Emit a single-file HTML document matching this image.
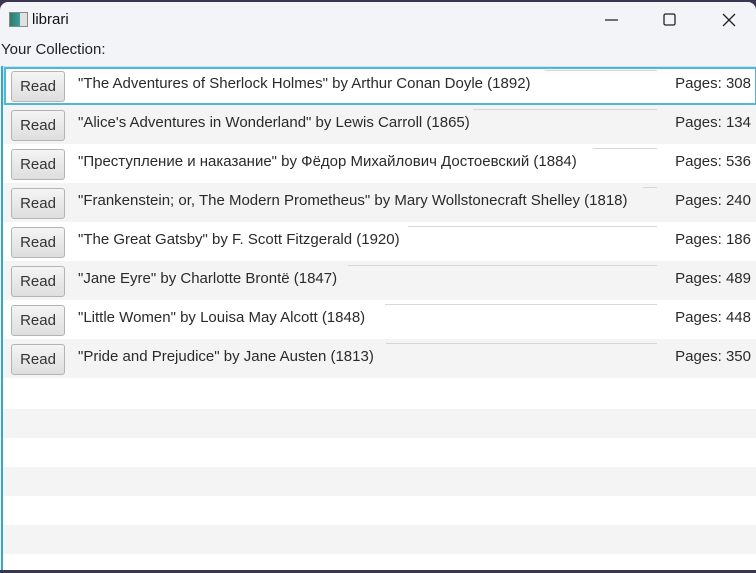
<!DOCTYPE html>
<html><head><meta charset="utf-8"><style>
*{margin:0;padding:0;box-sizing:border-box}
body{width:756px;height:573px;overflow:hidden;background:#3a3550;font-family:"Liberation Sans","DejaVu Sans",sans-serif;position:relative}
.win{position:absolute;left:0;top:2px;width:756px;height:568px;background:#f3f4f8;border-radius:8px 8px 0 0;overflow:hidden}
.title{position:absolute;left:0;top:0;width:756px;height:36px}
.title .ic{position:absolute;left:9px;top:10px;width:19px;height:15px;background:linear-gradient(90deg,#2d7d6a,#3aa0a0 60%,#e0e0e0 60%);border:1px solid #888}
.title .t{position:absolute;left:32px;top:9px;font-size:15px;color:#111}
.lbl{position:absolute;left:1px;top:39px;font-size:15px;color:#222}
.list{position:absolute;left:1px;top:64px;width:755px;height:504px;background:#fff;border-left:2px solid #3aa3c8}
.row{position:absolute;left:0;width:755px;height:39px}
.g{background:#f4f4f4}
.btn{position:absolute;left:8px;top:5px;width:54px;height:31px;border:1px solid #b4b4b4;border-radius:3px;background:linear-gradient(#f4f4f4,#dedede);font-size:15px;color:#333;text-align:center;line-height:29px}
.tx{position:absolute;left:75px;top:9px;font-size:15px;color:#2a2a2a;white-space:nowrap}
.pg{position:absolute;right:7px;top:9px;font-size:15px;color:#2a2a2a}
.ln{position:absolute;top:4px;height:1px;background:#d6d6d6}
.e{position:absolute;left:0;width:755px;height:29px}
.focus{position:absolute;left:1px;top:1px;width:753px;height:38px;border:2px solid #4fb8d8;outline:1px solid #c6e6f0}
</style></head><body>
<div class="win">
<div class="title"><div class="ic"></div><div class="t">librari</div>
<svg style="position:absolute;left:600px;top:10px" width="140" height="16"><line x1="5" y1="8" x2="18" y2="8" stroke="#222" stroke-width="1.3"/><rect x="64" y="2" width="11" height="11" rx="1.5" fill="none" stroke="#222" stroke-width="1.3"/><path d="M123 2L135 14M135 2L123 14" stroke="#222" stroke-width="1.3"/></svg></div>
<div class="lbl">Your Collection:</div>
<div class="list">
<div class="row" style="top:0"><div class="focus"></div><div class="ln" style="left:542px;width:112px"></div><div class="btn">Read</div><div class="tx">"The Adventures of Sherlock Holmes" by Arthur Conan Doyle (1892)</div><div class="pg">Pages: 308</div></div>
<div class="row g" style="top:39px"><div class="ln" style="left:470px;width:184px"></div><div class="btn">Read</div><div class="tx">"Alice's Adventures in Wonderland" by Lewis Carroll (1865)</div><div class="pg">Pages: 134</div></div>
<div class="row" style="top:78px"><div class="ln" style="left:590px;width:64px"></div><div class="btn">Read</div><div class="tx">"Преступление и наказание" by Фёдор Михайлович Достоевский (1884)</div><div class="pg">Pages: 536</div></div>
<div class="row g" style="top:117px"><div class="ln" style="left:640px;width:14px"></div><div class="btn">Read</div><div class="tx">"Frankenstein; or, The Modern Prometheus" by Mary Wollstonecraft Shelley (1818)</div><div class="pg">Pages: 240</div></div>
<div class="row" style="top:156px"><div class="ln" style="left:405px;width:249px"></div><div class="btn">Read</div><div class="tx">"The Great Gatsby" by F. Scott Fitzgerald (1920)</div><div class="pg">Pages: 186</div></div>
<div class="row g" style="top:195px"><div class="ln" style="left:345px;width:309px"></div><div class="btn">Read</div><div class="tx">"Jane Eyre" by Charlotte Brontë (1847)</div><div class="pg">Pages: 489</div></div>
<div class="row" style="top:234px"><div class="ln" style="left:382px;width:272px"></div><div class="btn">Read</div><div class="tx">"Little Women" by Louisa May Alcott (1848)</div><div class="pg">Pages: 448</div></div>
<div class="row g" style="top:273px"><div class="ln" style="left:383px;width:271px"></div><div class="btn">Read</div><div class="tx">"Pride and Prejudice" by Jane Austen (1813)</div><div class="pg">Pages: 350</div></div>
<div class="e g" style="top:343px"></div>
<div class="e g" style="top:401px"></div>
<div class="e g" style="top:459px"></div>
</div>
</div>
</body></html>
